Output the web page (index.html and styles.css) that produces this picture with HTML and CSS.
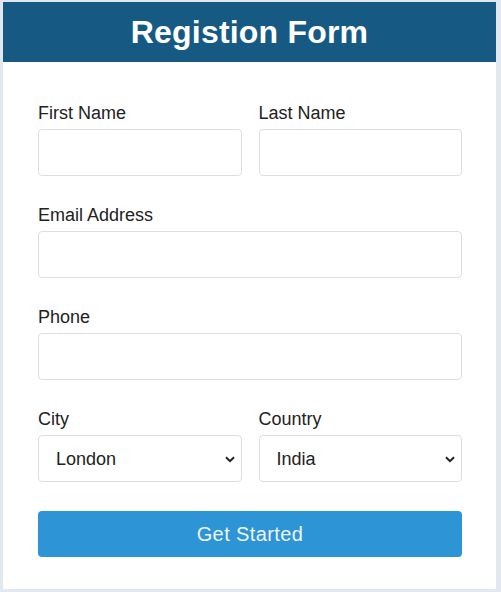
FILE: index.html
```html
<!DOCTYPE html>
<html lang="en">
<head>
<meta charset="utf-8">
<title>Registion Form</title>
<link rel="stylesheet" href="styles.css">
</head>
<body>
<div class="card">
  <header class="head"><h1 class="title">Registion Form</h1></header>
  <form class="form">
    <div class="row two">
      <div class="field"><label class="label">First Name</label><input class="input" type="text"></div>
      <div class="field"><label class="label">Last Name</label><input class="input" type="text"></div>
    </div>
    <div class="row">
      <div class="field"><label class="label">Email Address</label><input class="input" type="email"></div>
    </div>
    <div class="row">
      <div class="field"><label class="label">Phone</label><input class="input" type="tel"></div>
    </div>
    <div class="row two">
      <div class="field"><label class="label">City</label>
        <div class="selwrap">
          <select class="input select"><option>London</option></select>
          <svg class="chev" width="10" height="7" viewBox="0 0 10 7"><path d="M1 1.2 L5 5.2 L9 1.2" fill="none" stroke="#222" stroke-width="2"/></svg>
        </div>
      </div>
      <div class="field"><label class="label">Country</label>
        <div class="selwrap">
          <select class="input select"><option>India</option></select>
          <svg class="chev" width="10" height="7" viewBox="0 0 10 7"><path d="M1 1.2 L5 5.2 L9 1.2" fill="none" stroke="#222" stroke-width="2"/></svg>
        </div>
      </div>
    </div>
    <button class="btn" type="button">Get Started</button>
  </form>
</div>
</body>
</html>
```
FILE: styles.css
```css
html, body { margin: 0; padding: 0; }
body {
  background: #e2e8f0;
  font-family: "Liberation Sans", Arial, sans-serif;
  padding: 2px 5px 3px 3px;
  box-sizing: border-box;
  height: 592px;
}
.card {
  background: #fff;
  width: 493px;
  height: 587px;
}
.head {
  background: #165a84;
  height: 60px;
  display: flex;
  align-items: center;
  justify-content: center;
}
.title {
  margin: 0;
  color: #fff;
  font-size: 32px;
  font-weight: bold;
  letter-spacing: 0.2px;
}
.form {
  padding: 41px 34px 0 35px;
  display: flex;
  flex-direction: column;
}
.row { display: flex; gap: 17px; margin-bottom: 29px; }
.row.two .field { flex: 1; }
.field { flex: 1; display: flex; flex-direction: column; }
.label {
  font-size: 18px;
  line-height: 20px;
  color: #222;
  margin-bottom: 6px;
}
.input {
  box-sizing: border-box;
  height: 47px;
  border: 1px solid #dedede;
  border-radius: 4px;
  background: #fff;
  font-family: "Liberation Sans", Arial, sans-serif;
  font-size: 18px;
  color: #222;
  padding: 0 16px;
  width: 100%;
  margin: 0;
}
.selwrap { position: relative; }
.select { appearance: none; -webkit-appearance: none; padding-left: 17px; }
.chev { position: absolute; right: 7px; top: 21px; pointer-events: none; }
.btn {
  margin-top: 0;
  height: 46px;
  border: 0;
  border-radius: 4px;
  background: #2d94d5;
  color: #eef6fc;
  font-family: "Liberation Sans", Arial, sans-serif;
  font-size: 20px;
  letter-spacing: 0.4px;
}
```
